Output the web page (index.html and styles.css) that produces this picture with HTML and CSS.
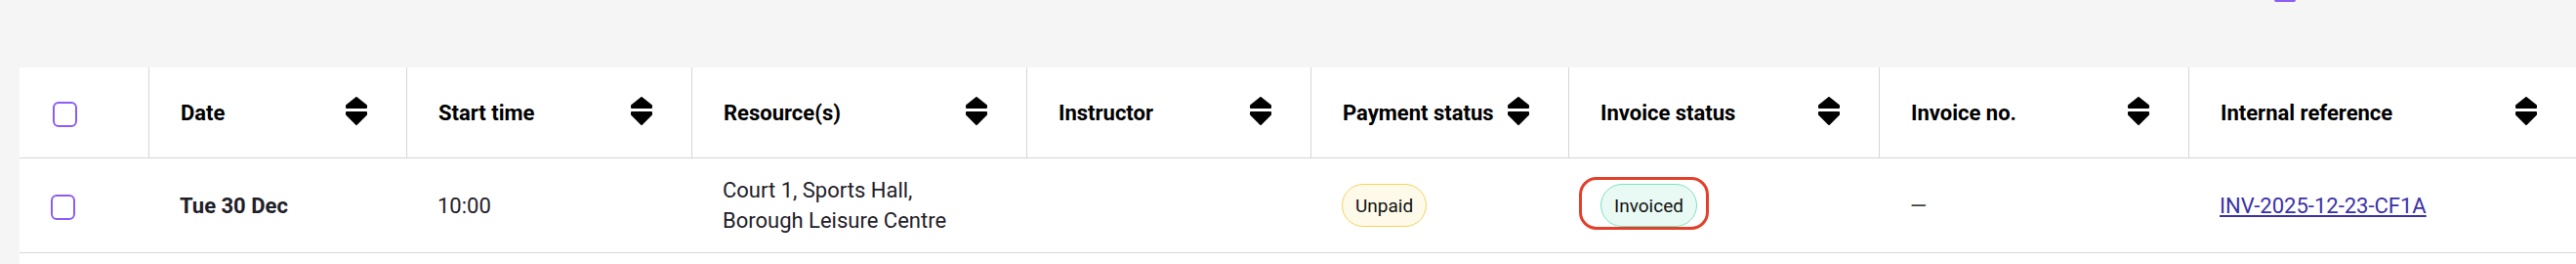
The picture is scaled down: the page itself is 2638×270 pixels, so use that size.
FILE: index.html
```html
<!DOCTYPE html>
<html lang="en">
<head>
    <meta charset="UTF-8">
    <meta name="viewport" content="width=device-width, initial-scale=1.0">
    <title>Bookings</title>
    <link rel="stylesheet" href="styles.css">
</head>
<body>
    <div class="page">
        <div class="toolbar">
            <span class="toolbar-btn"></span>
        </div>

        <div class="table">
            <div class="table-row table-head">
                <div class="th th-check"><span class="checkbox"></span></div>
                <div class="th"><span>Date</span><svg class="sort-icon" viewBox="0 0 22 29"><path d="M11 1 L21 9 V11 H1 V9 Z"/><path d="M1 16 H21 V18 L11 28 L1 18 Z"/></svg></div>
                <div class="th"><span>Start time</span><svg class="sort-icon" viewBox="0 0 22 29"><path d="M11 1 L21 9 V11 H1 V9 Z"/><path d="M1 16 H21 V18 L11 28 L1 18 Z"/></svg></div>
                <div class="th"><span>Resource(s)</span><svg class="sort-icon" viewBox="0 0 22 29"><path d="M11 1 L21 9 V11 H1 V9 Z"/><path d="M1 16 H21 V18 L11 28 L1 18 Z"/></svg></div>
                <div class="th"><span>Instructor</span><svg class="sort-icon" viewBox="0 0 22 29"><path d="M11 1 L21 9 V11 H1 V9 Z"/><path d="M1 16 H21 V18 L11 28 L1 18 Z"/></svg></div>
                <div class="th"><span>Payment status</span><svg class="sort-icon" viewBox="0 0 22 29"><path d="M11 1 L21 9 V11 H1 V9 Z"/><path d="M1 16 H21 V18 L11 28 L1 18 Z"/></svg></div>
                <div class="th"><span>Invoice status</span><svg class="sort-icon" viewBox="0 0 22 29"><path d="M11 1 L21 9 V11 H1 V9 Z"/><path d="M1 16 H21 V18 L11 28 L1 18 Z"/></svg></div>
                <div class="th"><span>Invoice no.</span><svg class="sort-icon" viewBox="0 0 22 29"><path d="M11 1 L21 9 V11 H1 V9 Z"/><path d="M1 16 H21 V18 L11 28 L1 18 Z"/></svg></div>
                <div class="th"><span>Internal reference</span><svg class="sort-icon" viewBox="0 0 22 29"><path d="M11 1 L21 9 V11 H1 V9 Z"/><path d="M1 16 H21 V18 L11 28 L1 18 Z"/></svg></div>
            </div>

            <div class="table-row">
                <div class="td td-check"><span class="checkbox"></span></div>
                <div class="td date">Tue 30 Dec</div>
                <div class="td">10:00</div>
                <div class="td">Court 1, Sports Hall, Borough Leisure Centre</div>
                <div class="td"></div>
                <div class="td"><span class="pill pill-unpaid">Unpaid</span></div>
                <div class="td highlighted">
                    <span class="pill pill-invoiced">Invoiced</span>
                    <span class="highlight"></span>
                </div>
                <div class="td empty">—</div>
                <div class="td"><a href="#" class="ref-link">INV-2025-12-23-CF1A</a></div>
            </div>
        </div>
    </div>
</body>
</html>
```

FILE: styles.css
```css
* {
    box-sizing: border-box;
}
html, body {
    height: 270px;
    overflow: hidden;
}
body {
    margin: 0;
    background: #f5f5f5;
    font-family: Roboto, "Liberation Sans", sans-serif;
    color: #1f2029;
}
.page {
    padding-left: 20px;
    overflow: hidden;
}
.toolbar {
    height: 69px;
    display: flex;
    justify-content: flex-end;
    align-items: flex-start;
    padding-right: 287px;
}
.toolbar-btn {
    width: 22px;
    height: 2px;
    background: #8b5cf6;
    border-radius: 0 0 4px 4px;
}
.table {
    width: 2618px;
    min-height: 201px;
    background: white;
}
.table-row {
    display: grid;
    grid-template-columns: 132px 264px 292px 343px 291px 264px 318px 317px 397px;
}
.th {
    height: 93px;
    display: flex;
    align-items: center;
    justify-content: space-between;
    gap: 8px;
    padding: 0 40px 0 32px;
    border-left: 1px solid #d6d6d6;
    border-bottom: 1px solid #d6d6d6;
    font-size: 22px;
    font-weight: 700;
    color: #000;
    white-space: nowrap;
}
.th-check {
    border-left: none;
    padding-left: 34px;
}
.sort-icon {
    width: 22px;
    height: 29px;
    flex-shrink: 0;
    margin-bottom: 3px;
    fill: #000;
    stroke: #000;
    stroke-width: 2;
    stroke-linejoin: round;
}
.td {
    height: 97px;
    display: flex;
    align-items: center;
    padding: 0 40px 0 32px;
    border-bottom: 1px solid #d6d6d6;
    font-size: 22px;
    line-height: 31px;
}
.date {
    font-weight: 700;
}
.checkbox {
    width: 25px;
    height: 26px;
    margin-top: 4px;
    border: 2px solid #8b5cf6;
    border-radius: 6px;
    background: white;
}
.pill {
    display: inline-flex;
    align-items: center;
    height: 44px;
    padding: 0 13px;
    border: 1px solid;
    border-radius: 22px;
    font-size: 19px;
    color: #111;
}
.pill-unpaid {
    background: #fefaea;
    border-color: #f6d261;
}
.pill-invoiced {
    background: #e8faf3;
    border-color: #7fe2c0;
}
.highlighted {
    position: relative;
    padding-left: 33px;
}
.highlight {
    position: absolute;
    left: 11px;
    top: 19px;
    width: 133px;
    height: 54px;
    border: 3px solid #e3402b;
    border-radius: 18px;
}
.empty {
    color: #444;
}
.ref-link {
    color: #3a32a6;
}
```
